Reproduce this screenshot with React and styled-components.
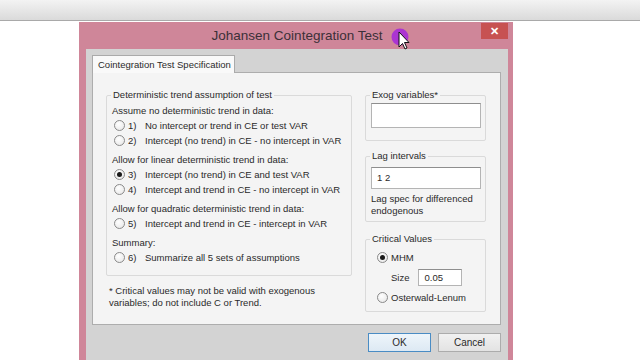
import React from 'react'
import styled, { createGlobalStyle } from 'styled-components'

const GlobalStyle = createGlobalStyle`
    body {
        margin: 0;
        background: #ffffff;
        font-family: "Liberation Sans", Arial, sans-serif;
        color: #2a2a2a;
    }
`

const Screen = styled.div`
    width: 640px;
    height: 360px;
    overflow: hidden;
    position: relative;
`

const TopBar = styled.div`
    height: 20px;
    background: linear-gradient(#f3f3f3, #dadada);
    border-bottom: 1px solid #a9a9a9;
`

const Stage = styled.div`
    padding: 1px 0 0 79px;
`

const Dialog = styled.div`
    width: 434px;
    height: 345px;
    box-sizing: border-box;
    background: #cf8699;
    padding: 0 5px 0 7px;
    font-size: 9.5px;
    white-space: nowrap;
`

const TitleBar = styled.div`
    height: 27px;
    display: grid;
    grid-template-columns: 1fr auto 1fr;
    align-items: start;
`

const Title = styled.div`
    grid-column: 2;
    font-size: 13.5px;
    line-height: 28px;
    color: #3b3038;
`

const CloseButton = styled.div`
    grid-column: 3;
    justify-self: end;
    margin-top: 1px;
    width: 27px;
    height: 16px;
    background: #c75252;
    color: #fff;
    font-size: 11px;
    font-weight: bold;
    line-height: 16px;
    text-align: center;
`

const Client = styled.div`
    background: #d3d3d3;
    padding: 6px 7px 0 6px;
    height: 318px;
    box-sizing: border-box;
`

const Tab = styled.div`
    position: relative;
    z-index: 1;
    height: 18px;
    width: 143px;
    box-sizing: border-box;
    background: #f9f9f9;
    border: 1px solid #aaa;
    border-bottom: none;
    line-height: 17px;
    padding-left: 5px;
    margin-bottom: -1px;
`

const TabPanel = styled.div`
    height: 253px;
    box-sizing: border-box;
    background: #f4f4f4;
    border: 1px solid #adadad;
    display: flex;
    gap: 13px;
    padding: 16px 0 0 13px;
`

const Column = styled.div`
    width: ${p => p.$width}px;
    display: flex;
    flex-direction: column;
`

const Group = styled.fieldset`
    margin: ${p => p.$gap || 0}px 0 0 0;
    padding: 0 5px ${p => p.$padBottom || 6}px 5px;
    border: 1px solid #dadada;
    border-radius: 2px;
    min-width: 0;
`

const Legend = styled.legend`
    padding: 0 2px;
    margin-left: -1px;
    line-height: 12px;
`

const Section = styled.div`
    margin-top: ${p => (p.$first ? 2 : 4)}px;
`

const Heading = styled.div`
    line-height: 15px;
`

const RadioRow = styled.div`
    display: flex;
    align-items: center;
    height: 15px;
    margin-left: ${p => p.$indent || 2}px;
    margin-top: ${p => p.$top || 0}px;
`

const Circle = styled.span`
    width: 11px;
    height: 11px;
    flex-shrink: 0;
    box-sizing: border-box;
    border-radius: 50%;
    border: 1px solid #8a8a8a;
    background: radial-gradient(circle at 40% 35%, #ffffff, #e4e4e4);
    display: flex;
    align-items: center;
    justify-content: center;
    margin-right: 3px;
    &::after {
        content: '';
        width: 5px;
        height: 5px;
        border-radius: 50%;
        background: #1a1a1a;
        display: ${p => (p.$checked ? 'block' : 'none')};
    }
`

const Num = styled.span`
    width: 17px;
`

const Note = styled.div`
    line-height: 12px;
    margin: 9px 0 0 3px;
`

const TextBox = styled.div`
    width: ${p => p.$width}px;
    height: ${p => p.$height}px;
    box-sizing: border-box;
    background: #fff;
    border: 1px solid #b4b4b4;
    border-top-color: #8e8e8e;
    line-height: ${p => p.$height - 2}px;
    padding-left: 5px;
    margin-top: ${p => p.$top || 0}px;
`

const Hint = styled.div`
    line-height: 12px;
    margin-top: 4px;
`

const SizeRow = styled.div`
    display: flex;
    align-items: center;
    gap: 9px;
    margin: 4px 0 4px 20px;
`

const ButtonRow = styled.div`
    display: flex;
    justify-content: flex-end;
    gap: 7px;
    margin-top: 8px;
`

const Button = styled.div`
    width: 63px;
    height: 19px;
    box-sizing: border-box;
    border: 1px solid ${p => (p.$primary ? '#4a8cc4' : '#acacac')};
    background: ${p => (p.$primary ? 'linear-gradient(#eef5fb, #dde9f3)' : 'linear-gradient(#f1f1f1, #e3e3e3)')};
    font-size: 10px;
    line-height: 17px;
    text-align: center;
`

const Cursor = styled.svg`
    position: absolute;
    left: 389px;
    top: 27px;
`

const Radio = ({ checked, num, label, indent, top }) => (
    <RadioRow $indent={indent} $top={top}>
        <Circle $checked={checked} />
        {num && <Num>{num}</Num>}
        {label}
    </RadioRow>
)

const App = () => {
    return (
        <Screen>
            <GlobalStyle />
            <TopBar />
            <Stage>
                <Dialog>
                    <TitleBar>
                        <Title>Johansen Cointegration Test</Title>
                        <CloseButton>✕</CloseButton>
                    </TitleBar>
                    <Client>
                        <Tab>Cointegration Test Specification</Tab>
                        <TabPanel>
                            <Column $width={246}>
                                <Group $padBottom={10}>
                                    <Legend>Deterministic trend assumption of test</Legend>
                                    <Section $first>
                                        <Heading>Assume no deterministic trend in data:</Heading>
                                        <Radio num="1)" label="No intercept or trend in CE or test VAR" />
                                        <Radio num="2)" label="Intercept (no trend) in CE - no intercept in VAR" />
                                    </Section>
                                    <Section>
                                        <Heading>Allow for linear deterministic trend in data:</Heading>
                                        <Radio checked num="3)" label="Intercept (no trend) in CE and test VAR" />
                                        <Radio num="4)" label="Intercept and trend in CE - no intercept in VAR" />
                                    </Section>
                                    <Section>
                                        <Heading>Allow for quadratic deterministic trend in data:</Heading>
                                        <Radio num="5)" label="Intercept and trend in CE - intercept in VAR" />
                                    </Section>
                                    <Section>
                                        <Heading>Summary:</Heading>
                                        <Radio num="6)" label="Summarize all 5 sets of assumptions" />
                                    </Section>
                                </Group>
                                <Note>
                                    * Critical values may not be valid with exogenous<br />
                                    variables; do not include C or Trend.
                                </Note>
                            </Column>
                            <Column $width={121}>
                                <Group $padBottom={12}>
                                    <Legend>Exog variables*</Legend>
                                    <TextBox $width={110} $height={25} $top={2} />
                                </Group>
                                <Group $gap={9} $padBottom={4}>
                                    <Legend>Lag intervals</Legend>
                                    <TextBox $width={110} $height={22} $top={5}>1 2</TextBox>
                                    <Hint>
                                        Lag spec for differenced<br />
                                        endogenous
                                    </Hint>
                                </Group>
                                <Group $gap={11} $padBottom={6}>
                                    <Legend>Critical Values</Legend>
                                    <Radio checked indent={6} top={5} label="MHM" />
                                    <SizeRow>
                                        Size
                                        <TextBox $width={44} $height={17}>0.05</TextBox>
                                    </SizeRow>
                                    <Radio indent={6} label="Osterwald-Lenum" />
                                </Group>
                            </Column>
                        </TabPanel>
                        <ButtonRow>
                            <Button $primary>OK</Button>
                            <Button>Cancel</Button>
                        </ButtonRow>
                    </Client>
                </Dialog>
            </Stage>
            <Cursor width="24" height="26" viewBox="0 0 24 26">
                <circle cx="11" cy="10" r="8.5" fill="#a526dc" opacity="0.85" />
                <path d="M10 5 L10 20 L13.5 16.5 L16 22 L18 21 L15.5 15.5 L20 15.5 Z" fill="#fff" stroke="#111" strokeWidth="1" strokeLinejoin="round" />
            </Cursor>
        </Screen>
    )
}

export default App
